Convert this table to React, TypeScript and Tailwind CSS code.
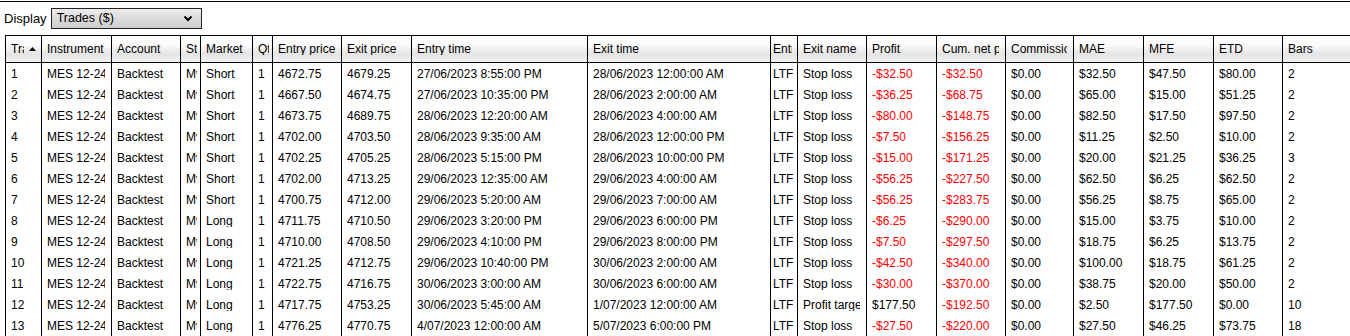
import React from "react";

const rows: string[][] = [
  ["1","MES 12-24","Backtest","MyStrategy","Short","1","4672.75","4679.25","27/06/2023 8:55:00 PM","28/06/2023 12:00:00 AM","LTF","Stop loss","-$32.50","-$32.50","$0.00","$32.50","$47.50","$80.00","2"],
  ["2","MES 12-24","Backtest","MyStrategy","Short","1","4667.50","4674.75","27/06/2023 10:35:00 PM","28/06/2023 2:00:00 AM","LTF","Stop loss","-$36.25","-$68.75","$0.00","$65.00","$15.00","$51.25","2"],
  ["3","MES 12-24","Backtest","MyStrategy","Short","1","4673.75","4689.75","28/06/2023 12:20:00 AM","28/06/2023 4:00:00 AM","LTF","Stop loss","-$80.00","-$148.75","$0.00","$82.50","$17.50","$97.50","2"],
  ["4","MES 12-24","Backtest","MyStrategy","Short","1","4702.00","4703.50","28/06/2023 9:35:00 AM","28/06/2023 12:00:00 PM","LTF","Stop loss","-$7.50","-$156.25","$0.00","$11.25","$2.50","$10.00","2"],
  ["5","MES 12-24","Backtest","MyStrategy","Short","1","4702.25","4705.25","28/06/2023 5:15:00 PM","28/06/2023 10:00:00 PM","LTF","Stop loss","-$15.00","-$171.25","$0.00","$20.00","$21.25","$36.25","3"],
  ["6","MES 12-24","Backtest","MyStrategy","Short","1","4702.00","4713.25","29/06/2023 12:35:00 AM","29/06/2023 4:00:00 AM","LTF","Stop loss","-$56.25","-$227.50","$0.00","$62.50","$6.25","$62.50","2"],
  ["7","MES 12-24","Backtest","MyStrategy","Short","1","4700.75","4712.00","29/06/2023 5:20:00 AM","29/06/2023 7:00:00 AM","LTF","Stop loss","-$56.25","-$283.75","$0.00","$56.25","$8.75","$65.00","2"],
  ["8","MES 12-24","Backtest","MyStrategy","Long","1","4711.75","4710.50","29/06/2023 3:20:00 PM","29/06/2023 6:00:00 PM","LTF","Stop loss","-$6.25","-$290.00","$0.00","$15.00","$3.75","$10.00","2"],
  ["9","MES 12-24","Backtest","MyStrategy","Long","1","4710.00","4708.50","29/06/2023 4:10:00 PM","29/06/2023 8:00:00 PM","LTF","Stop loss","-$7.50","-$297.50","$0.00","$18.75","$6.25","$13.75","2"],
  ["10","MES 12-24","Backtest","MyStrategy","Long","1","4721.25","4712.75","29/06/2023 10:40:00 PM","30/06/2023 2:00:00 AM","LTF","Stop loss","-$42.50","-$340.00","$0.00","$100.00","$18.75","$61.25","2"],
  ["11","MES 12-24","Backtest","MyStrategy","Long","1","4722.75","4716.75","30/06/2023 3:00:00 AM","30/06/2023 6:00:00 AM","LTF","Stop loss","-$30.00","-$370.00","$0.00","$38.75","$20.00","$50.00","2"],
  ["12","MES 12-24","Backtest","MyStrategy","Long","1","4717.75","4753.25","30/06/2023 5:45:00 AM","1/07/2023 12:00:00 AM","LTF","Profit target","$177.50","-$192.50","$0.00","$2.50","$177.50","$0.00","10"],
  ["13","MES 12-24","Backtest","MyStrategy","Long","1","4776.25","4770.75","4/07/2023 12:00:00 AM","5/07/2023 6:00:00 PM","LTF","Stop loss","-$27.50","-$220.00","$0.00","$27.50","$46.25","$73.75","18"],
];

const headers = [
  "Trade number","Instrument","Account","Strategy","Market pos.","Qty","Entry price","Exit price","Entry time","Exit time","Entry name","Exit name","Profit","Cum. net profit","Commission","MAE","MFE","ETD","Bars",
];

const gridCols =
  "grid grid-cols-[36px_70px_69px_20px_52px_20px_69px_70px_176px_183px_27px_69px_70px_69px_68px_70px_70px_69px_minmax(0,1fr)]";

function pad(i: number, header: boolean) {
  if (i === 10) return header ? "pl-[2px] pr-[5px]" : "pl-[2px] pr-0";
  if (i === 3 || i === 5) return "pl-[5px] pr-[3px]";
  return "pl-[5px] pr-[6px]";
}

export default function App() {
  return (
    <div
      className="w-[1350px] h-[336px] overflow-hidden bg-white text-black text-[12px] leading-none"
      style={{ fontFamily: '"Liberation Sans", Arial, sans-serif' }}
    >
      <div className="pt-px">
        <div className="h-px bg-black" />
      </div>
      <div className="h-[33px] flex items-center pl-[4px] gap-[4px] text-[13px]">
        <span>Display</span>
        <div className="w-[151px] h-[21px] border border-[#222] bg-[linear-gradient(to_bottom,#ececec_0%,#dcdcdc_50%,#cdcdcd_100%)] flex items-center justify-between pl-[5px] pr-[8px]">
          <span className="text-[12.5px]">Trades ($)</span>
          <svg width="10" height="7" viewBox="0 0 10 7">
            <polyline points="1.5,1.5 5,5 8.5,1.5" fill="none" stroke="#000" strokeWidth="2" />
          </svg>
        </div>
      </div>
      <div className="pl-[5px]">
        <div className={`${gridCols} h-[28px] border-y border-black bg-[linear-gradient(to_bottom,#ffffff_0%,#fafafa_35%,#e4e4e4_70%,#f2f2f2_100%)]`}>
          {headers.map((h, i) => (
            <div
              key={i}
              className={`min-w-0 border-l border-black flex items-center overflow-hidden ${pad(i, true)}`}
            >
              {i === 0 ? (
                <div className="flex items-center w-full">
                  <span className="block w-[13px] shrink-0 overflow-hidden whitespace-nowrap">{h}</span>
                  <svg width="7" height="4" viewBox="0 0 7 4" className="ml-[5px] shrink-0">
                    <polygon points="0,4 7,4 3.5,0" fill="#000" />
                  </svg>
                </div>
              ) : (
                <span className="block min-w-0 w-full overflow-hidden whitespace-nowrap">{h}</span>
              )}
            </div>
          ))}
        </div>
        {rows.map((r, ri) => (
          <div key={ri} className={`${gridCols} h-[21px]`}>
            {r.map((c, ci) => (
              <div
                key={ci}
                className={`min-w-0 border-l border-black flex items-center overflow-hidden ${pad(ci, false)} ${
                  (ci === 12 || ci === 13) && c.startsWith("-") ? "text-[#ff0000]" : ""
                }`}
              >
                <span className="block min-w-0 w-full overflow-hidden whitespace-nowrap">{c}</span>
              </div>
            ))}
          </div>
        ))}
      </div>
    </div>
  );
}
